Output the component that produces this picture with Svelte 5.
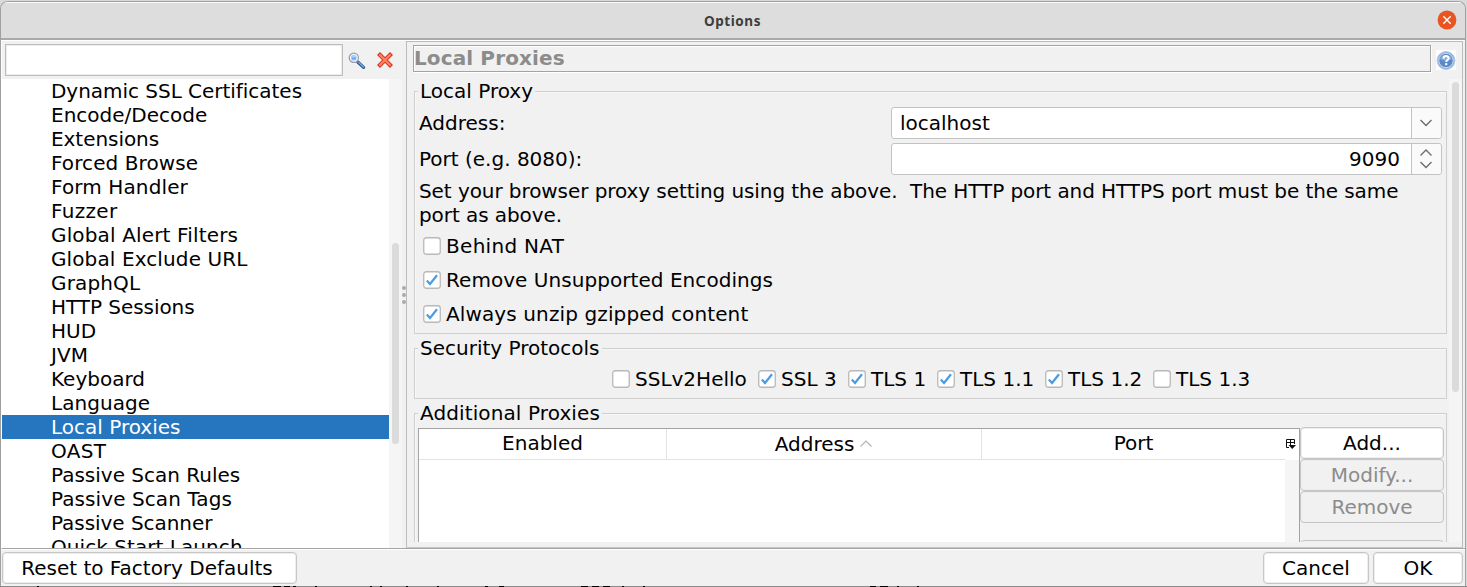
<script>
  const sections = [
    { name: 'Dynamic SSL Certificates', track: -0.03 },
    { name: 'Encode/Decode', track: 0 },
    { name: 'Extensions', track: -0.05 },
    { name: 'Forced Browse', track: 0.08 },
    { name: 'Form Handler', track: 0.12 },
    { name: 'Fuzzer', track: 0.3 },
    { name: 'Global Alert Filters', track: 0.15 },
    { name: 'Global Exclude URL', track: 0.11 },
    { name: 'GraphQL', track: 0.14 },
    { name: 'HTTP Sessions', track: -0.05 },
    { name: 'HUD', track: 0 },
    { name: 'JVM', track: 0.1 },
    { name: 'Keyboard', track: 0 },
    { name: 'Language', track: 0.06 },
    { name: 'Local Proxies', track: 0 },
    { name: 'OAST', track: 0.3 },
    { name: 'Passive Scan Rules', track: 0 },
    { name: 'Passive Scan Tags', track: 0.08 },
    { name: 'Passive Scanner', track: -0.05 },
    { name: 'Quick Start Launch', track: 0.06 }
  ];
  const selected = 'Local Proxies';
  let options = $state([
    { name: 'Behind NAT', on: false, track: 0.3 },
    { name: 'Remove Unsupported Encodings', on: true, track: 0.05 },
    { name: 'Always unzip gzipped content', on: true, track: 0.12 }
  ]);
  let protocols = $state([
    { name: 'SSLv2Hello', on: false, w: 146 },
    { name: 'SSL 3', on: true, w: 90 },
    { name: 'TLS 1', on: true, w: 89 },
    { name: 'TLS 1.1', on: true, w: 108 },
    { name: 'TLS 1.2', on: true, w: 108 },
    { name: 'TLS 1.3', on: false, w: 100 }
  ]);
</script>

{#snippet check(item)}
  <button class="check" role="checkbox" aria-checked={item.on} onclick={() => (item.on = !item.on)}>
    <svg width="18" height="18" viewBox="0 0 18 18">
      <rect x=".75" y=".75" width="16.5" height="16.5" rx="2.5" fill="#fff" stroke="#b9b9b9" stroke-width="1.3" />
      {#if item.on}<path d="M3.8 9.6 7 13 14 4.2" fill="none" stroke="#4a9ce6" stroke-width="2.2" />{/if}
    </svg>
    <span style:letter-spacing="{item.track ?? 0}px">{item.name}</span>
  </button>
{/snippet}

<div class="screen">
  <div class="window">
    <header class="titlebar">
      <span class="wtitle">Options</span>
      <svg class="close" width="20" height="20" viewBox="0 0 20 20">
        <circle cx="10" cy="10" r="9.4" fill="#e95420" />
        <path d="M6.3 6.3l7.4 7.4M13.7 6.3l-7.4 7.4" stroke="#fff" stroke-width="1.4" />
      </svg>
    </header>

    <div class="main">
      <aside>
        <div class="search">
          <div class="field"></div>
          <svg class="mag" width="18" height="18" viewBox="0 0 18 18">
            <path d="M9.8 10 15.6 15.4" stroke="#24588f" stroke-width="3.2" stroke-linecap="round" />
            <path d="M11 10.8 15.6 15" stroke="#75add9" stroke-width="1.5" stroke-linecap="round" />
            <path d="M8.7 8.7l2 2" stroke="#888" stroke-width="1.6" />
            <circle cx="5.8" cy="5.7" r="4.5" fill="#a9cdff" stroke="#999da4" stroke-width="1.4" />
            <circle cx="5.8" cy="5.7" r="3.4" fill="none" stroke="#eef5ff" stroke-width="1.1" />
            <path d="M3.9 6.5h4" stroke="#6fa6f8" stroke-width="1.8" />
          </svg>
          <svg class="clear" width="16" height="16" viewBox="0 0 16 16">
            <path d="M3 3l10 10M13 3 3 13" stroke="#d9351c" stroke-width="4.2" stroke-linecap="square" stroke-linejoin="round" />
            <path d="M3 3l10 10M13 3 3 13" stroke="#ff8263" stroke-width="2.3" stroke-linecap="round" />
          </svg>
        </div>
        <div class="treewrap">
          <ul>
            {#each sections as s}<li class:selected={s.name === selected} style:letter-spacing="{s.track}px">{s.name}</li>{/each}
          </ul>
          <div class="track left"><div class="thumb"></div></div>
        </div>
      </aside>

      <div class="divider"><i></i><i></i><i></i></div>

      <section class="panel">
        <div class="heading">
          <h1>Local Proxies</h1>
          <svg width="20" height="20" viewBox="0 0 20 20">
            <rect width="20" height="20" fill="#fff" />
            <circle cx="10" cy="10.5" r="9" fill="#8baedb" stroke="#b6cce8" />
            <circle cx="10" cy="10.5" r="7.2" fill="#5d8ac4" stroke="#dce8f7" stroke-width=".8" />
            <path d="M4 9a6.2 5 0 0 1 12 0q-6 3-12 0" fill="#8eb1dc" />
            <path d="M7.6 8.5c0-3.2 5-3.1 5-.2 0 1.8-2.400 1.800-2.400 3.800" fill="none" stroke="#fff" stroke-width="2" />
            <rect x="9.1" y="13.2" width="2.2" height="2" fill="#fff" />
          </svg>
        </div>
        <div class="scroller">
          <div class="content">
            <div class="group proxy">
              <h2>Local Proxy</h2>
              <div class="row">
                <span>Address:</span>
                <div class="input">
                  <span class="value">localhost</span>
                  <span class="drop"><svg width="14" height="8" viewBox="0 0 14 8"><path d="M1.5 1 7 6.5 12.5 1" /></svg></span>
                </div>
              </div>
              <div class="row">
                <span>Port (e.g. 8080):</span>
                <div class="input">
                  <span class="value num">9090</span>
                  <span class="drop spin">
                    <svg width="14" height="8" viewBox="0 0 14 8"><path d="M1.5 6.5 7 1 12.5 6.5" /></svg>
                    <svg width="14" height="8" viewBox="0 0 14 8"><path d="M1.5 1 7 6.5 12.5 1" /></svg>
                  </span>
                </div>
              </div>
              <p>Set your browser proxy setting using the above.&nbsp; The HTTP port and HTTPS port must be the same<br />port as above.</p>
              {#each options as item}<div class="option">{@render check(item)}</div>{/each}
            </div>

            <div class="group security">
              <h2>Security Protocols</h2>
              <div class="protocols">
                {#each protocols as item}<div style:width="{item.w}px">{@render check(item)}</div>{/each}
              </div>
            </div>

            <div class="group additional">
              <h2 class="wide">Additional Proxies</h2>
              <div class="tablerow">
                <div class="table">
                  <div class="thead">
                    <span class="c1">Enabled</span>
                    <span class="c2">Address
                      <svg width="14" height="8" viewBox="0 0 14 8"><path d="M1.5 6.5 7 1 12.5 6.5" fill="none" stroke="#b3b3b3" stroke-width="1.2" /></svg>
                    </span>
                    <span class="c3">Port</span>
                  </div>
                  <div class="corner">
                    <svg width="12" height="12" viewBox="0 0 12 12" fill="none" stroke="#111">
                      <path d="M4 9.5H1.5V1.5H9.5V6M1.500 4.500H9.500M5.500 1.500V7" />
                      <path d="M3.500 7h7.500L7.200 11z" fill="#111" stroke="none" />
                    </svg>
                  </div>
                </div>
                <div class="actions">
                  <button class="btn">Add...</button>
                  <button class="btn" disabled>Modify...</button>
                  <button class="btn" disabled>Remove</button>
                  <button class="btn next" disabled aria-label="Enable all"></button>
                </div>
              </div>
            </div>
          </div>
          <div class="track right"><div class="thumb"></div></div>
        </div>
      </section>
    </div>

    <footer>
      <button class="btn reset">Reset to Factory Defaults</button>
      <button class="btn cancel">Cancel</button>
      <button class="btn ok">OK</button>
    </footer>
  </div>
  <svg class="behind" width="1467" height="1" viewBox="0 0 1467 1">
    <path d="M37 .5h2M273 .5h8M284 .5h6M293 .5h3M315 .5h2M370 .5h2M380 .5h2M406 .5h2M437 .5h2M485 .5h3M499 .5h5M581 .5h7M592 .5h7M603 .5h7M622 .5h2M643 .5h2M870 .5h6M880 .5h8M897 .5h2M917 .5h2" stroke="#000" />
  </svg>
</div>

<style>
  :global(body) { background: #d9d9d9; }
  * { box-sizing: border-box; }
  .screen { width: 1467px; height: 587px; overflow: hidden; background: #d9d9d9; font: 20px/24px "DejaVu Sans", sans-serif; color: #000; padding-top: 1px; display: flex; flex-direction: column; }
  .window { width: 1466px; height: 585px; background: #f1f1f1; border: 1px solid #a0a0a0; border-bottom: 0; border-radius: 8px 8px 0 0; display: flex; flex-direction: column; overflow: hidden; flex: none; }
  .behind { display: block; background: #8a8a8a; flex: none; }
  .titlebar { height: 38px; flex: none; background: #ddd; border-top: 1px solid #fafafa; border-bottom: 2px solid #a9a9a9; display: grid; grid-template-columns: 1fr auto 1fr; align-items: center; }
  .wtitle { grid-column: 2; font: bold 13.5px/20px "Noto Sans", sans-serif; letter-spacing: .55px; color: #3d3d3d; margin-right: 1px; }
  .close { grid-column: 3; justify-self: end; margin: -2px 8px 0 0; }
  .main { display: flex; height: 509px; flex: none; border-top: 1px solid #fff; border-bottom: 1px solid #a5a5a5; border-left: 1px solid #fff; }
  aside { width: 400px; display: flex; flex-direction: column; }
  .search { height: 38px; flex: none; display: flex; padding: 3px 0 0 3px; }
  .field { width: 338px; height: 32px; background: #fff; border: 1px solid #bdbdbd; box-shadow: inset 0 0 0 1px #ececec; }
  .mag { margin: 8px 0 0 5px; }
  .clear { margin: 8px 0 0 11px; }
  .treewrap { display: flex; flex: 1; min-height: 0; overflow: hidden; }
  ul { list-style: none; margin: 0; padding: 0; width: 387px; background: #fff; overflow: hidden; flex: none; }
  li { height: 24px; padding-left: 49px; white-space: nowrap; }
  li.selected { background: #2675bf; color: #fff; }
  .track { width: 13px; background: #f5f5f5; padding: 0 3px; flex: none; }
  .thumb { width: 7px; border-radius: 4px; background: #dbdbdb; }
  .left .thumb { height: 201px; margin-top: 164px; }
  .right .thumb { height: 310px; margin-top: 3px; }
  .divider { width: 4px; flex: none; display: flex; flex-direction: column; gap: 3px; padding-top: 245px; }
  .divider i { width: 4px; height: 4px; border-radius: 2px; background: #aaa; }
  .panel { width: 1057px; flex: none; border: 1px solid #bcbcbc; border-bottom-color: #c6c6c6; display: flex; flex-direction: column; }
  .heading { display: flex; height: 37px; flex: none; padding: 3px 0 0 6px; gap: 5px; }
  h1 { margin: 0; width: 1018px; height: 27px; border: 1px solid #a3a3a3; box-shadow: inset 1px 1px #fff, 1px 1px #fff; font-size: 20px; line-height: 24px; letter-spacing: .12px; color: #8c8c8c; padding-left: 0; }
  .heading svg { margin-top: 5px; }
  .scroller { display: flex; height: 463px; overflow: hidden; }
  .content { width: 1042px; flex: none; padding: 12px 0 0 7px; }
  .group { width: 1033px; border: 1px solid #cfcfcf; box-shadow: inset 1px 1px #f8f8f8; padding-left: 4px; }
  h2 { font: inherit; margin: -13px 0 0 -1px; width: max-content; background: #f1f1f1; padding: 0 2px; height: 24px; }
  .wide { letter-spacing: .11px; }
  .proxy { height: 243px; }
  .row { display: flex; height: 32px; margin: 4px 0; justify-content: space-between; align-items: center; padding-right: 4px; }
  .input { width: 551px; height: 32px; background: #fff; border: 1px solid #c3c3c3; border-radius: 3px; display: flex; }
  .value { width: 519px; padding-left: 8px; line-height: 30px; }
  .num { text-align: right; padding-right: 11px; }
  .drop { flex: 1; border-left: 1px solid #c3c3c3; background: #fafafa; display: flex; flex-direction: column; justify-content: center; align-items: center; border-radius: 0 3px 3px 0; }
  .drop svg { margin-right: 1px; }
  .drop path { fill: none; stroke: #6a6a6a; stroke-width: 1.3; }
  .spin { gap: 4px; }
  p { margin: 4px 0 3px; white-space: nowrap; letter-spacing: -.075px; }
  .check { all: unset; display: flex; align-items: center; height: 24px; gap: 5px; white-space: nowrap; }
  .option { height: 34px; padding: 4px 0 0 4px; }
  .security { height: 51px; margin-top: 14px; }
  .protocols { display: flex; margin: 7px 0 0 193px; }
  .additional { height: 200px; margin-top: 14px; }
  .tablerow { display: flex; margin: 3px 0 0 -1px; }
  .table { width: 882px; height: 140px; border: 1px solid #a3a3a3; background: #fff; display: flex; }
  .thead { display: flex; width: 866px; height: 31px; border-bottom: 1px solid #e3e3e3; line-height: 29px; text-align: center; }
  .c1 { width: 248px; border-right: 1px solid #e3e3e3; }
  .c2 { width: 315px; border-right: 1px solid #e3e3e3; display: flex; justify-content: center; gap: 5px; align-items: center; }
  .c3 { width: 303px; }
  .corner { flex: 1; background: linear-gradient(#fff 31px, #f5f5f5 31px); padding-top: 9px; line-height: 0; }
  .corner svg { flex: none; }
  .actions { display: flex; flex-direction: column; width: 144px; margin-top: -1px; }
  .btn { font: inherit; color: #000; height: 32px; padding: 0; background: #fff; border: 1px solid #c6c6c6; border-radius: 4px; box-shadow: inset 0 0 0 1px #eee; flex: none; }
  .btn:disabled { background: #f1f1f1; color: #8c8c8c; }
  .next { margin-top: 17px; }
  footer { display: flex; height: 37px; padding: 2px 2px 0 1px; border-top: 1px solid #fff; }
  .reset { width: 295px; padding-right: 5px; }
  .cancel { width: 106px; margin-left: auto; }
  .ok { width: 90px; margin-left: 4px; }
</style>
